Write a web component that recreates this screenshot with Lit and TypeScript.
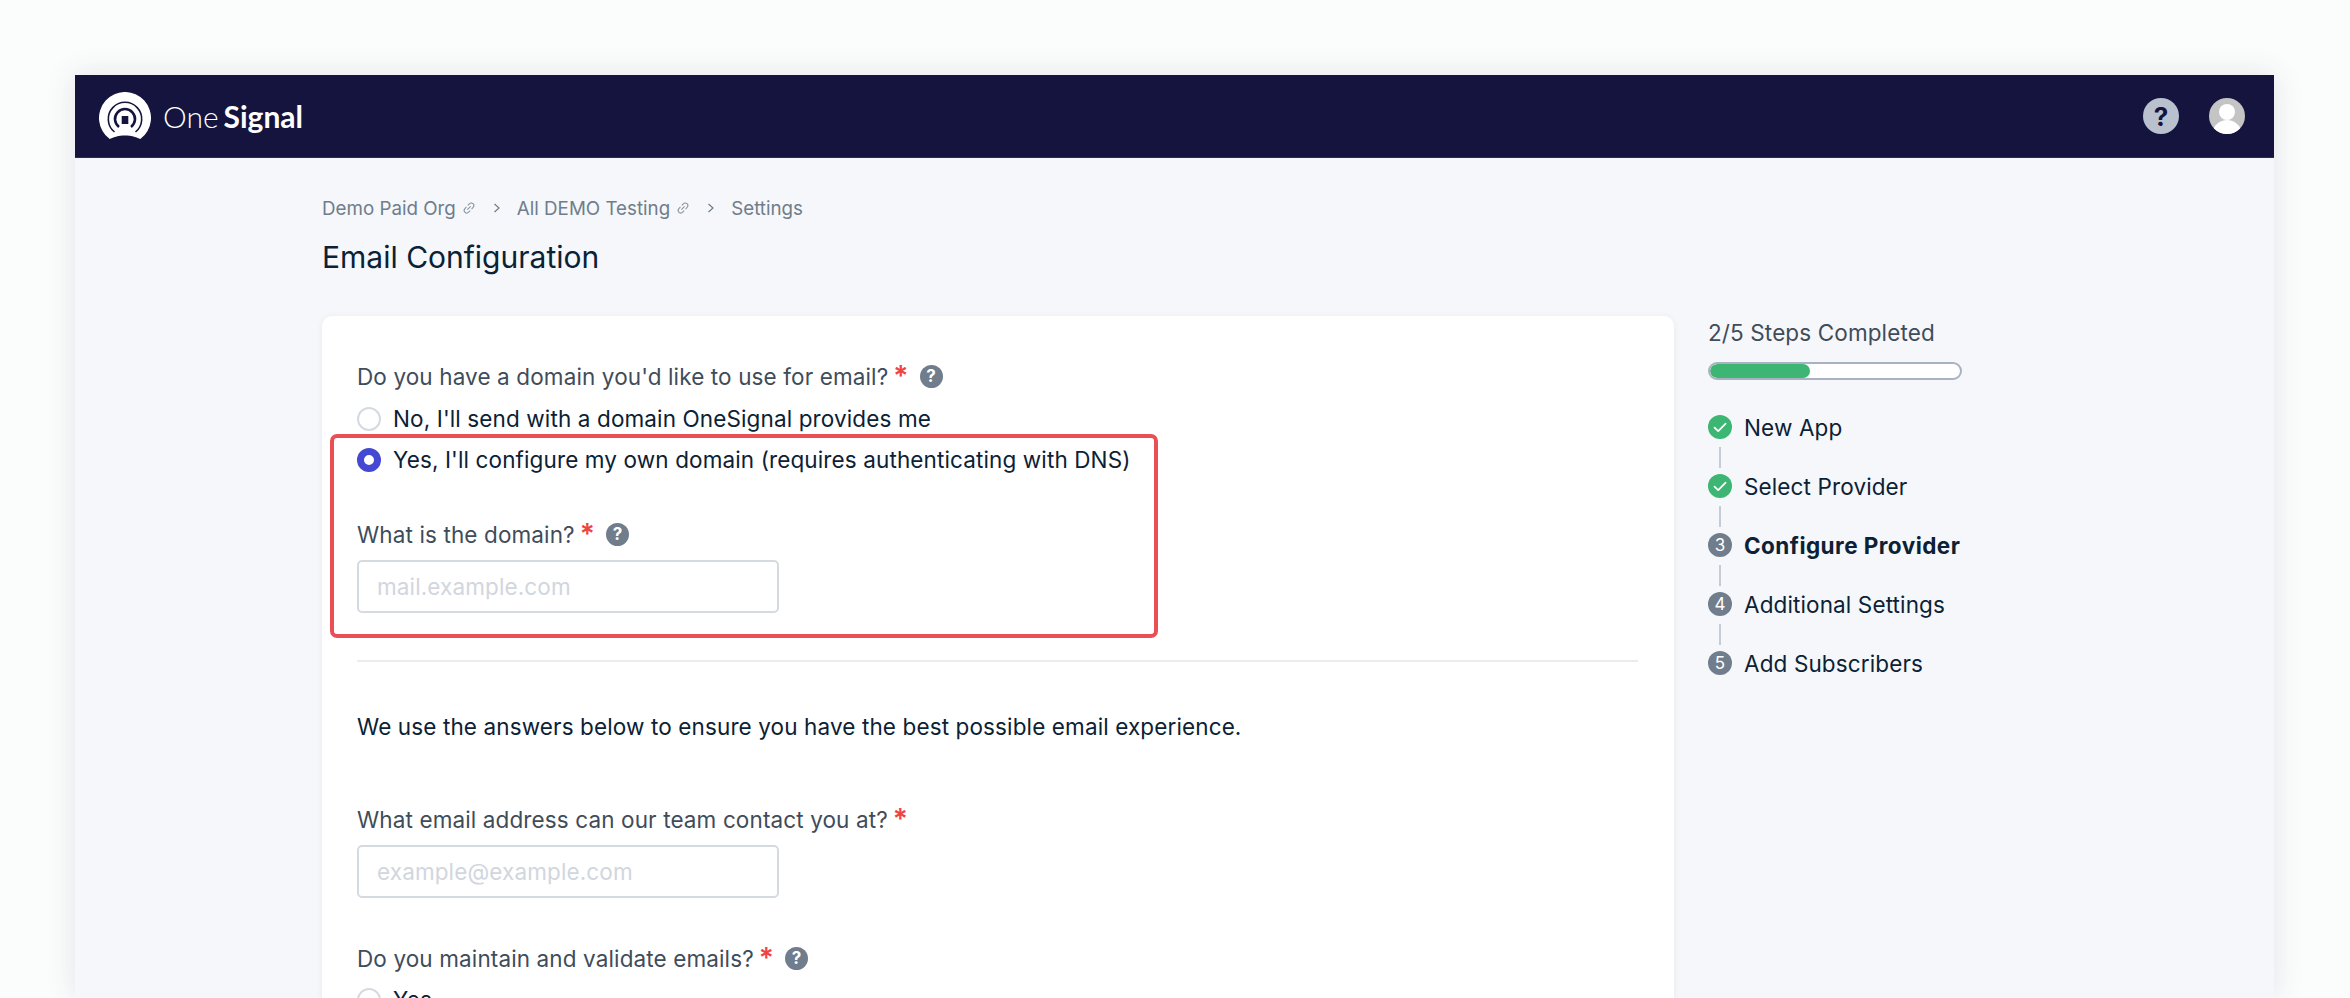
import { LitElement, html, css, svg } from "lit";
import { customElement } from "lit/decorators.js";

const linkIcon = html`<svg class="link" viewBox="0 0 12 12" fill="none" stroke="#8b96a3" stroke-width="0.9">
  <path d="M4.6 7.4l2.8-2.8M5 3.8l1.3-1.4a2.1 2.1 0 0 1 3.2 3.1L8.2 6.9M7 8.2L5.7 9.6a2.1 2.1 0 0 1-3.2-3.1L3.8 5.1" />
</svg>`;

const chevron = html`<svg class="sep" viewBox="0 0 8 12" fill="none" stroke="#6f7d8c" stroke-width="1.2"><path d="M1.5 2l4.5 4-4.5 4" /></svg>`;

const helpIcon = html`<span class="help">?</span>`;

const check = svg`<path d="M6.5 12.6l3.7 3.6L17.6 8.6" fill="none" stroke="#fff" stroke-width="1.7" stroke-linecap="round" stroke-linejoin="round" />`;

const steps = [
  { label: "New App", done: true },
  { label: "Select Provider", done: true },
  { label: "Configure Provider", active: true },
  { label: "Additional Settings" },
  { label: "Add Subscribers" },
];

@customElement("app-root")
export class AppRoot extends LitElement {
  static styles = css`
    :host {
      display: block;
      height: 998px;
      overflow: hidden;
      background: #fbfcfc;
      font-family: Inter, "Liberation Sans", sans-serif;
      color: #0b2135;
    }
    .window {
      margin: 75px 76px 0 75px;
      height: 923px;
      background: #f5f7fa;
      box-shadow: 0 0 28px rgba(60, 70, 90, 0.13);
    }
    .topbar {
      height: 83px;
      box-sizing: border-box;
      border-bottom: 1px solid #2b2b52;
      background: #14143e;
      display: flex;
      align-items: center;
      padding: 0 29px 0 24px;
    }
    .logo {
      display: flex;
      align-items: center;
      gap: 12px;
      color: #fff;
      font-family: Lato, sans-serif;
      font-size: 30px;
      flex: 1;
    }
    .logo svg {
      width: 52px;
      height: 48px;
    }
    .logo .one {
      font-weight: 300;
    }
    .logo .signal {
      font-weight: 700;
      margin-left: 5px;
    }
    .wordmark {
      display: flex;
    }
    .top-help {
      width: 36px;
      height: 36px;
      border-radius: 50%;
      background: #b9c1cf;
      color: #14143e;
      font-weight: 700;
      font-size: 26px;
      display: flex;
      align-items: center;
      justify-content: center;
      margin-right: 30px;
    }
    .avatar {
      width: 36px;
      height: 36px;
    }
    .content {
      padding: 36px 0 0 247px;
    }
    .crumbs {
      display: flex;
      align-items: center;
      font-size: 18.75px;
      color: #6f7d8c;
      height: 28px;
    }
    .link {
      width: 14px;
      height: 14px;
      margin-left: 6px;
    }
    .sep {
      margin: 0 16px 0 17px;
      width: 8px;
      height: 12px;
    }
    h1 {
      margin: 16px 0 0;
      font-size: 30px;
      line-height: 38px;
      font-weight: 400;
      color: #0b2135;
    }
    .columns {
      display: flex;
      margin-top: 40px;
      gap: 34px;
      align-items: flex-start;
    }
    .card {
      position: relative;
      width: 1352px;
      box-sizing: border-box;
      height: 700px;
      background: #fff;
      border-radius: 10px;
      box-shadow: 0 1px 6px rgba(60, 70, 90, 0.08);
      padding: 45px 36px 0 35px;
    }
    .label {
      display: flex;
      align-items: center;
      height: 30px;
      font-size: 22.5px;
      letter-spacing: 0.12px;
      color: #3f4c5a;
    }
    .label.after-radio {
      margin-top: 39px;
    }
    .label.after-note {
      margin-top: 62px;
    }
    .label.after-input {
      margin-top: 45px;
    }
    .req {
      color: #ef4444;
      font-size: 28px;
      line-height: 30px;
      font-weight: 600;
      margin-left: 5px;
      align-self: flex-start;
      height: 20px;
    }
    .help {
      width: 23px;
      height: 23px;
      border-radius: 50%;
      background: #6f7d8c;
      color: #fff;
      font-size: 17px;
      font-weight: 700;
      letter-spacing: 0;
      display: inline-flex;
      align-items: center;
      justify-content: center;
      margin-left: 11px;
    }
    .radios {
      margin-top: 7px;
    }
    .radios.last {
      margin-top: 6px;
    }
    .radio-row {
      display: flex;
      align-items: center;
      gap: 12px;
      height: 41px;
      font-size: 22.5px;
      letter-spacing: 0.12px;
      color: #0b2135;
    }
    .radio {
      width: 24px;
      height: 24px;
      box-sizing: border-box;
      border-radius: 50%;
      border: 2px solid #d5dae1;
      background: #fff;
    }
    .radio.on {
      border: 7.5px solid #4448d2;
    }
    .input {
      width: 422px;
      height: 53px;
      box-sizing: border-box;
      border: 2px solid #d5dae1;
      border-radius: 5px;
      background: #fff;
      margin-top: 11px;
      padding: 0 18px;
      display: flex;
      align-items: center;
      font-size: 22.5px;
      letter-spacing: 0.12px;
      color: #d1d6de;
    }
    .divider {
      height: 2px;
      background: #eaedf0;
      margin-top: 47px;
    }
    .note {
      margin-top: 50px;
      font-size: 22.5px;
      letter-spacing: 0.12px;
      line-height: 30px;
      color: #0b2135;
    }
    .annotation {
      position: absolute;
      left: 8px;
      top: 118px;
      width: 828px;
      height: 204px;
      box-sizing: border-box;
      border: 4px solid #ea4f55;
      border-radius: 7px;
    }
    .side {
      width: 254px;
      padding-top: 2px;
    }
    .progress-label {
      font-size: 22.5px;
      letter-spacing: 0.12px;
      line-height: 30px;
      color: #3f4c5a;
    }
    .bar {
      margin-top: 14px;
      height: 18px;
      box-sizing: border-box;
      border: 2px solid #a9b2c0;
      border-radius: 9px;
      background: #fff;
      overflow: hidden;
    }
    .bar div {
      height: 100%;
      width: 100px;
      background: #3cb672;
      border-radius: 7px;
    }
    .steps {
      margin-top: 35px;
    }
    .step {
      display: flex;
      align-items: center;
      gap: 12px;
      height: 24px;
      font-size: 22.5px;
      letter-spacing: 0.12px;
      white-space: nowrap;
    }
    .step.active {
      font-weight: 700;
      letter-spacing: 0.45px;
    }
    .step svg {
      width: 24px;
      height: 24px;
      flex: none;
    }
    .badge {
      width: 24px;
      height: 24px;
      flex: none;
      border-radius: 50%;
      background: #6f7d8c;
      color: #fff;
      font-size: 17px;
      font-weight: 400;
      letter-spacing: 0;
      display: flex;
      align-items: center;
      justify-content: center;
    }
    .connector {
      width: 2px;
      height: 21px;
      margin: 8px 0 6px 11px;
      background: #c5ccd6;
    }
  `;

  render() {
    return html`
      <div class="window">
        <header class="topbar">
          <div class="logo">
            <svg viewBox="0 0 52 48">
              <path d="M10.7 47A26 26 0 1 1 41.3 47C36 45 33 43.5 26 43.5S16 45 10.7 47Z" fill="#fff" />
              <path d="M15.5 40A16.7 16.7 0 1 1 36.5 40" fill="none" stroke="#14143e" stroke-width="1.6" />
              <path d="M20 35A10 10 0 1 1 32 35" fill="none" stroke="#14143e" stroke-width="2.6" />
              <rect x="22.7" y="24" width="6.6" height="8" fill="#14143e" />
            </svg>
            <div class="wordmark"><span class="one">One</span><span class="signal">Signal</span></div>
          </div>
          <div class="top-help">?</div>
          <svg class="avatar" viewBox="0 0 36 36">
            <defs><clipPath id="av"><circle cx="18" cy="18" r="18" /></clipPath></defs>
            <g clip-path="url(#av)">
              <rect width="36" height="36" fill="#c4c4c4" />
              <circle cx="18" cy="14" r="8" fill="#fff" />
              <path d="M3 36c1-9 8-14 15-14s14 5 15 14Z" fill="#fff" />
            </g>
          </svg>
        </header>
        <main class="content">
          <nav class="crumbs">
            <span>Demo Paid Org</span>${linkIcon}${chevron}
            <span>All DEMO Testing</span>${linkIcon}${chevron}
            <span>Settings</span>
          </nav>
          <h1>Email Configuration</h1>
          <div class="columns">
            <section class="card">
              <div class="label">Do you have a domain you'd like to use for email?<span class="req">*</span>${helpIcon}</div>
              <div class="radios">
                <div class="radio-row"><span class="radio"></span>No, I'll send with a domain OneSignal provides me</div>
                <div class="radio-row"><span class="radio on"></span>Yes, I'll configure my own domain (requires authenticating with DNS)</div>
              </div>
              <div class="label after-radio">What is the domain?<span class="req">*</span>${helpIcon}</div>
              <div class="input">mail.example.com</div>
              <div class="divider"></div>
              <div class="note">We use the answers below to ensure you have the best possible email experience.</div>
              <div class="label after-note">What email address can our team contact you at?<span class="req">*</span></div>
              <div class="input">example@example.com</div>
              <div class="label after-input">Do you maintain and validate emails?<span class="req">*</span>${helpIcon}</div>
              <div class="radios last">
                <div class="radio-row"><span class="radio"></span>Yes</div>
              </div>
              <div class="annotation"></div>
            </section>
            <aside class="side">
              <div class="progress-label">2/5 Steps Completed</div>
              <div class="bar"><div></div></div>
              <div class="steps">
                ${steps.map(
                  (s, i) => html`
                    ${i > 0 ? html`<div class="connector"></div>` : ""}
                    <div class="step ${s.active ? "active" : ""}">
                      ${s.done
                        ? html`<svg viewBox="0 0 24 24"><circle cx="12" cy="12" r="12" fill="#3cb672" />${check}</svg>`
                        : html`<span class="badge">${i + 1}</span>`}
                      ${s.label}
                    </div>
                  `
                )}
              </div>
            </aside>
          </div>
        </main>
      </div>
    `;
  }
}
